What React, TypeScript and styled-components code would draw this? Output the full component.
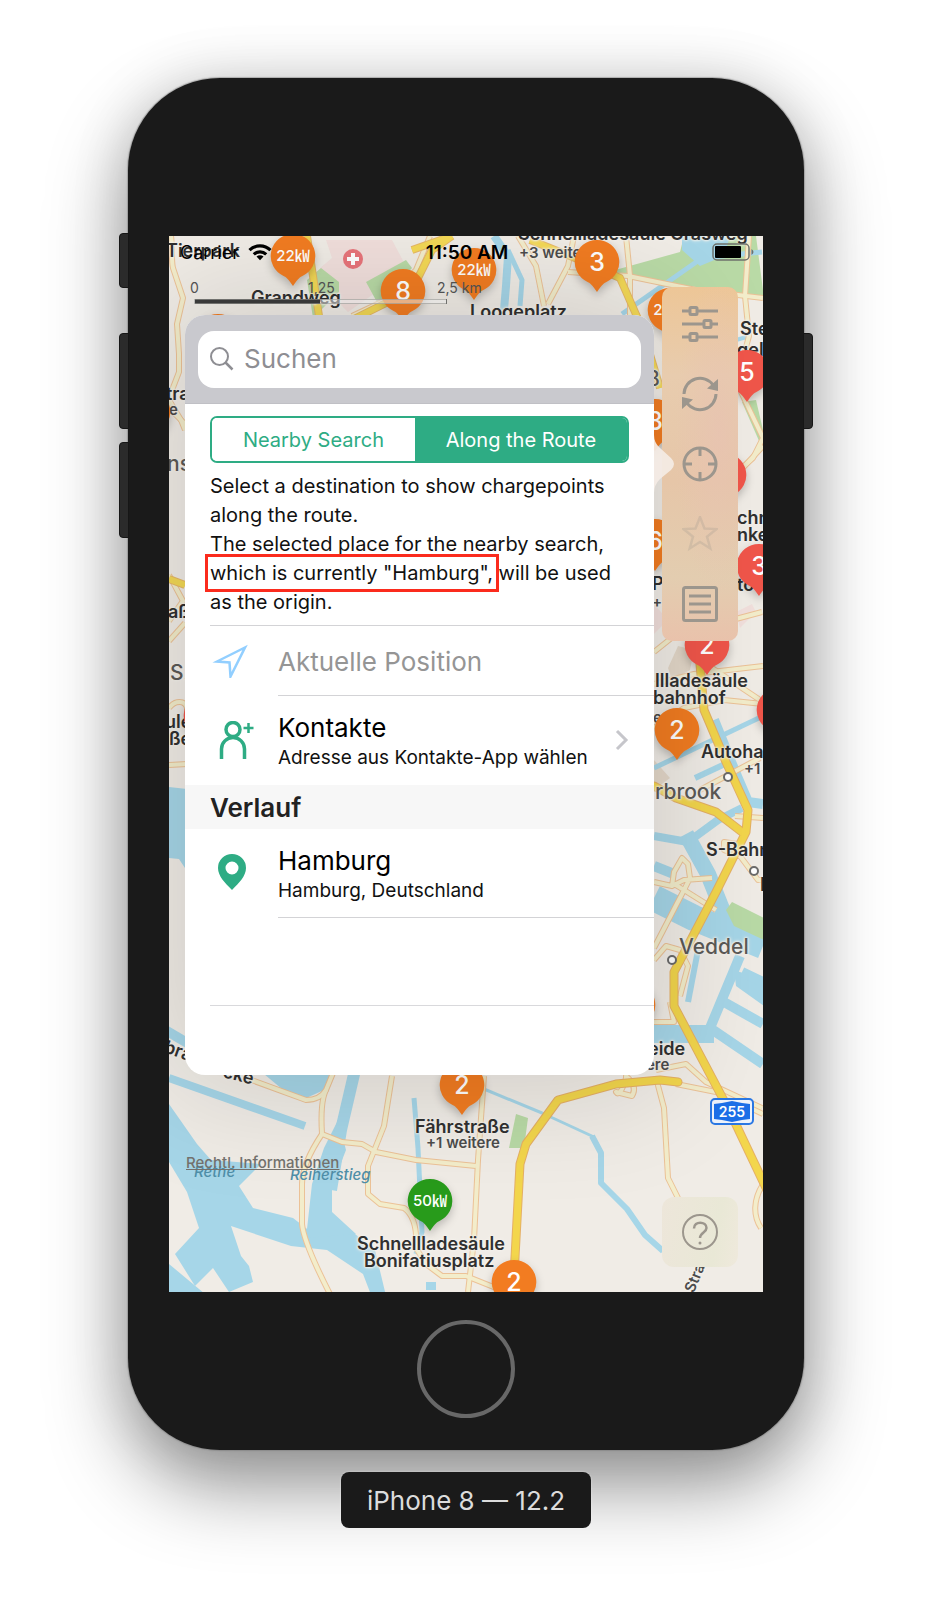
import React from "react";
import styled, { createGlobalStyle, css } from "styled-components";

const GlobalStyle = createGlobalStyle`
  *, *::before, *::after { box-sizing: border-box; }
  body {
    margin: 0;
    background: #fff;
    color: #111;
    font-family: Inter, "Liberation Sans", "Noto Sans CJK JP", sans-serif;
  }
  button, input { font: inherit; color: inherit; }
`;

const GREEN = "#2eac84";
const ORANGE = "#f27c21";
const RED = "#f0564a";

/* ---------- device ---------- */

const Page = styled.main`
  display: flex;
  flex-direction: column;
  align-items: center;
  padding: 78px 24px 72px;
  overflow: hidden;
`;

const Device = styled.section`
  position: relative;
  display: flex;
  flex-direction: column;
  align-items: center;
  width: 100%;
  max-width: 676px;
  padding: 158px 41px 32px;
  border-radius: 92px;
  background: #1a1a1a;
  box-shadow:
    0 0 1px 1px rgba(120, 120, 120, 0.5),
    0 0 60px rgba(0, 0, 0, 0.12),
    0 36px 80px rgba(0, 0, 0, 0.42);
`;

const SideKey = styled.span<{ $top: number; $height: number; $side: "left" | "right" }>`
  position: absolute;
  top: ${(p) => p.$top}px;
  ${(p) => p.$side}: -9px;
  width: 10px;
  height: ${(p) => p.$height}px;
  border: 1px solid #161616;
  border-radius: ${(p) => (p.$side === "left" ? "4px 0 0 4px" : "0 4px 4px 0")};
  background: #2b2b2b;
`;

const HomeButton = styled.button`
  width: 98px;
  height: 98px;
  margin-top: 28px;
  border: 4px solid #686868;
  border-radius: 50%;
  background: transparent;
`;

const DeviceName = styled.p`
  position: relative;
  margin: 22px 0 0;
  padding: 13px 26px 11px;
  border-radius: 8px;
  background: #1a1a1a;
  color: #dcdcdc;
  font-size: 26px;
  line-height: 32px;
  box-shadow: 0 0 2px rgba(255, 255, 255, 0.6);
`;

const Screen = styled.div`
  position: relative;
  display: flex;
  flex-direction: column;
  width: 100%;
  min-height: 1056px;
  overflow: hidden;
  background: #edeae4;
`;

/* ---------- map ---------- */

const MAP_ORIGIN = { x: 169, y: 236 };

const MapLayer = styled.div`
  position: absolute;
  inset: 0;
  overflow: hidden;
`;

const Terrain = styled.svg`
  display: block;
  width: 594px;
  height: 1056px;
`;

const PinRoot = styled.div<{ $x: number; $y: number; $small?: boolean }>`
  position: absolute;
  left: ${(p) => p.$x - MAP_ORIGIN.x - 22}px;
  top: ${(p) => p.$y - MAP_ORIGIN.y - 22}px;
  width: 44px;
  height: 52px;
  color: #fff;
  font-size: ${(p) => (p.$small ? 15 : 25)}px;
  font-weight: 500;
  line-height: 44px;
  text-align: center;
  white-space: nowrap;

  svg {
    position: absolute;
    inset: 0;
    overflow: visible;
    filter: drop-shadow(0 4px 4px rgba(0, 0, 0, 0.22));
  }
  span { position: relative; }
`;

type PinData = { x: number; y: number; text?: string; color?: string; small?: boolean };

const Pin = ({ x, y, text, color = ORANGE, small }: PinData) => (
  <PinRoot $x={x} $y={y} $small={small}>
    <svg width="44" height="52" viewBox="0 0 44 52" aria-hidden="true">
      <path d="M22 0a22 22 0 0 1 9 42.2c-3 1.4-5 4-9 9.8c-4-5.800-6-8.400-9-9.800A22 22 0 0 1 22 0z" fill={color} />
    </svg>
    {text && <span>{text}</span>}
  </PinRoot>
);

type LabelKind = "name" | "more" | "district" | "water";

const labelKinds = {
  name: css`font-size: 18px; font-weight: 600; color: #303030;`,
  more: css`font-size: 15px; font-weight: 600; color: #4c4c4c;`,
  district: css`font-size: 21px; font-weight: 500; color: #5c5a57;`,
  water: css`font-size: 15px; font-weight: 500; font-style: italic; color: #4f8fa8; text-shadow: none;`,
};

const MapLabel = styled.span<{ $x: number; $y: number; $kind: LabelKind; $angle?: number }>`
  position: absolute;
  left: ${(p) => p.$x - MAP_ORIGIN.x}px;
  top: ${(p) => p.$y - MAP_ORIGIN.y - 10}px;
  line-height: 20px;
  white-space: nowrap;
  text-shadow: 0 0 2px #f4f1ec, 0 0 2px #f4f1ec, 0 0 3px #f4f1ec, 0 0 4px #f4f1ec;
  ${(p) => labelKinds[p.$kind]}
  ${(p) => p.$angle !== undefined && css`transform: rotate(${p.$angle}deg);`}
`;

const Shield = styled.span`
  position: absolute;
  left: 541px;
  top: 862px;
  width: 44px;
  height: 27px;
  color: #fff;
  font-size: 14px;
  line-height: 27px;
  text-align: center;

  svg {
    position: absolute;
    inset: 0;
  }
  b {
    position: relative;
    font-weight: 600;
  }
`;

const pins: PinData[] = [
  { x: 218, y: 336 },
  { x: 293, y: 256, text: "22㎾", small: true },
  { x: 403, y: 291, text: "8" },
  { x: 474, y: 270, text: "22㎾", small: true },
  { x: 597, y: 262, text: "3" },
  { x: 670, y: 310, text: "22㎾", small: true },
  { x: 655, y: 421, text: "3" },
  { x: 655, y: 541, text: "6" },
  { x: 747, y: 372, text: "5", color: RED },
  { x: 724, y: 475, color: RED },
  { x: 759, y: 566, text: "3", color: RED },
  { x: 707, y: 645, text: "2", color: RED },
  { x: 677, y: 730, text: "2" },
  { x: 779, y: 710, color: RED },
  { x: 206, y: 716, color: RED },
  { x: 148, y: 412 },
  { x: 633, y: 1005 },
  { x: 462, y: 1085, text: "2" },
  { x: 430, y: 1201, text: "50㎾", color: "#289b1b", small: true },
  { x: 514, y: 1282, text: "2" },
];

const labels: { x: number; y: number; text: string; kind?: LabelKind; angle?: number }[] = [
  { x: 166, y: 251, text: "Tierpark" },
  { x: 251, y: 298, text: "Grandweg" },
  { x: 470, y: 312, text: "Loogeplatz" },
  { x: 518, y: 234, text: "Schnellladesäule Grasweg" },
  { x: 519, y: 253, text: "+3 weitere", kind: "more" },
  { x: 740, y: 329, text: "Stein" },
  { x: 737, y: 350, text: "gelb" },
  { x: 646, y: 379, text: "B", kind: "district" },
  { x: 166, y: 394, text: "traße" },
  { x: 169, y: 410, text: "e", kind: "more" },
  { x: 167, y: 464, text: "ns", kind: "district" },
  { x: 168, y: 612, text: "aße" },
  { x: 170, y: 673, text: "S.", kind: "district" },
  { x: 165, y: 722, text: "ule" },
  { x: 169, y: 739, text: "ße" },
  { x: 737, y: 518, text: "chni" },
  { x: 737, y: 535, text: "nken" },
  { x: 737, y: 585, text: "to" },
  { x: 652, y: 584, text: "P" },
  { x: 652, y: 602, text: "+", kind: "more" },
  { x: 655, y: 681, text: "llladesäule" },
  { x: 653, y: 698, text: "bahnhof" },
  { x: 653, y: 718, text: "e", kind: "more" },
  { x: 701, y: 752, text: "Autohaus" },
  { x: 744, y: 769, text: "+1", kind: "more" },
  { x: 655, y: 792, text: "rbrook", kind: "district" },
  { x: 706, y: 850, text: "S-Bahn" },
  { x: 760, y: 885, text: "E" },
  { x: 679, y: 947, text: "Veddel", kind: "district" },
  { x: 648, y: 1049, text: "eide" },
  { x: 646, y: 1065, text: "ere", kind: "more" },
  { x: 415, y: 1127, text: "Fährstraße" },
  { x: 426, y: 1143, text: "+1 weitere", kind: "more" },
  { x: 357, y: 1244, text: "Schnellladesäule" },
  { x: 364, y: 1261, text: "Bonifatiusplatz" },
  { x: 194, y: 1172, text: "Rethe", kind: "water" },
  { x: 290, y: 1175, text: "Reiherstieg", kind: "water" },
  { x: 164, y: 1051, text: "bra", angle: 20 },
  { x: 223, y: 1075, text: "cke", angle: 14 },
  { x: 680, y: 1278, text: "Stra", kind: "more", angle: -68 },
];

const minorRoads = [
  "M171 236c2 14 0 24 2 32l10 30-6 26 2 30 0 18-10 26 4 14 14 14",
  "M169 400l12 20 4 10",
  "M352 316l34-16 30-30 14-34",
  "M518 236l18 30 8 40",
  "M548 304l20-38 6-30",
  "M626 236l4 40 0 40",
  "M568 272l60 4 68 14 67 8",
  "M749 236l-4 60 4 40-8 30",
  "M741 392l22 46-10 20-20 18",
  "M763 446l-24 26-20 10",
  "M169 575l14 26-14 20",
  "M169 641l16-18",
  "M169 708c6-8 16-8 18 0l0 20",
  "M169 765l18-1",
  "M654 652l20-16 28-8 60-16",
  "M654 684l40-10 69-8",
  "M654 728l30-20 40-8 39 4",
  "M700 790l60-32",
  "M700 660l60 40",
  "M654 882l18 4 12-6 28-2M672 886l2-14 8-14 6 6 2 14-6 12-10-6zM684 890l-30 58",
  "M684 890l32 20",
  "M654 960l12-14 14 4 8 16-8 30",
  "M654 1022h20l-4-20",
  "M735 816l28 2",
  "M724 850l14 6 0-12-14-2z",
  "M740 856l18 24 5 0",
  "M656 1070l30-6 20 18 56 26",
  "M656 1078l8 30 4 70 10 20",
  "M763 1184c-10 16-10 32-2 44",
  "M246 1078l60 22q14 0 20-10l14-34",
  "M326 1090q-6 12-4 44l20 8 20 2 14 8 40 8 60 6",
  "M322 1134q-20 30-20 50v40q2 20 30 74",
  "M392 1076l-8 50-16 40v28l12 10 24 4q14 10 12 40l10 16 16 12h24l30 12",
  "M484 1076l-6 84-4 80-6 52",
  "M626 1078q-6 20-10 14l16 4q6-10-6-20z",
  "M676 1084l40 8 47 22",
];

const majorRoads = [
  "M307 236l6 40 6 40",
  "M530 240l50 20 40 18 22 50 18 60",
  "M352 320l60-30 20-40 20-14M412 250l40-14",
  "M169 579l16 6",
];

const highways = [
  "M700 664l4 46 22 52 22 48-2 22-30 60-42 80v34l56 106 38 80",
  "M654 786l22 12 40 14 26 20",
  "M514 1276l6-112 6-20 32-44 58-16 44-4 18 2",
];

const rivers: { d: string; w: number }[] = [
  { d: "M494 236l14 20-2 30-2 24", w: 8 },
  { d: "M508 250l14 30-2 26", w: 5 },
  { d: "M622 314l80-56 60-6", w: 5 },
  { d: "M169 1078l136 48", w: 8 },
  { d: "M165 1030l24 14", w: 10 },
  { d: "M355 1070l-14 60-10 60", w: 12 },
  { d: "M414 1098l4 50 4 84-6 22", w: 5 },
  { d: "M484 1089l58 24 52 24", w: 3 },
  { d: "M592 1136l9 17v30l26 26 18 26 18 16", w: 6 },
  { d: "M654 768l109-52", w: 5 },
  { d: "M695 778l30-14", w: 6 },
  { d: "M714 720l22 54 12 28 15 2", w: 10 },
  { d: "M654 836l34 6 30-22 24-12", w: 8 },
  { d: "M686 834l22 40 20 50", w: 16 },
  { d: "M654 866l20 8", w: 10 },
  { d: "M654 898l40 20 69 28", w: 26 },
  { d: "M698 950l-10 52", w: 6 },
  { d: "M740 956l-30 72 53 36", w: 10 },
  { d: "M654 1034h60", w: 18 },
  { d: "M724 1002l39 22M742 972l21 10", w: 10 },
  { d: "M654 425l20-24", w: 4 },
  { d: "M736 340l14-4", w: 4 },
];

const waterAreas = [
  "M169 787l18 2v82l-8-12-10-1z",
  "M682 236h48l-6 20-24 10-18-16z",
  "M169 1104l28 40 14 16 50 4-22 22 14 22 40 10 18 14 20-14 14 8 30 24 12 50h-14l-10-26-36-24-36-4-60-20 10 30 8 10 4 16-24 10-16-24-18 18-20-32 24-26-12-36-24-40z",
  "M169 1264l36 30h-36z",
  "M264 1074h66l-6 16-22 10-14-6z",
  "M312 1184l12-36 14-28 8 30-14 36v26l24 22-50 4z",
  "M426 1290v-8h10v8z",
  "M734 970l30 10v26l-28-20z",
];

const parks = [
  "M558 252l50 20 72-20 4-16 72 0 8 62-60-10-80-10z",
  "M307 280l14-12 18 14 0 10-26 26z",
  "M366 282l40-22 6 8-34 36z",
  "M742 402l14-2 7 30v20z",
  "M516 1114l12 4-4 30h-15z",
];

const blocks = [
  "M326 240h66l16 30-60 42-10-10-18-34 12-10z",
  "M736 612l16-8 4 8-16 16z",
  "M654 604l14 16-14 14z",
];

const CityMap = () => (
  <MapLayer>
    <Terrain viewBox="169 236 594 1056" role="img" aria-label="Map of Hamburg">
      <rect x="169" y="236" width="594" height="1056" fill="#f0ece6" />
      {blocks.map((d) => <path key={d} d={d} fill="#f1dfdc" />)}
      <path d="M668 668l10-22 16 4-4 20-18 10z M654 760l16 18-16 12z" fill="#e4d8c9" />
      {parks.map((d) => <path key={d} d={d} fill="#b9daa6" />)}
      {waterAreas.map((d) => <path key={d} d={d} fill="#a6d6e8" />)}
      <g fill="none" stroke="#a6d6e8" strokeLinejoin="round">
        {rivers.map((r) => <path key={r.d} d={r.d} strokeWidth={r.w} />)}
      </g>
      <path d="M726 910l6-8 32 16v22l-30-14z" fill="#b9daa6" />
      <g fill="none" strokeLinejoin="round">
        <g stroke="#ecc297" strokeWidth="6">
          {minorRoads.map((d) => <path key={d} d={d} />)}
        </g>
        <g stroke="#f3edcb" strokeWidth="4">
          {minorRoads.map((d) => <path key={d} d={d} />)}
        </g>
        <g stroke="#e7b867" strokeWidth="8">
          {majorRoads.map((d) => <path key={d} d={d} />)}
        </g>
        <g stroke="#f4d956" strokeWidth="6">
          {majorRoads.map((d) => <path key={d} d={d} />)}
        </g>
        <g stroke="#e5b065" strokeWidth="9" strokeLinecap="round">
          {highways.map((d) => <path key={d} d={d} />)}
        </g>
        <g stroke="#f3d64c" strokeWidth="7" strokeLinecap="round">
          {highways.map((d) => <path key={d} d={d} />)}
        </g>
      </g>
      <g fill="#fff" stroke="#6b6b6b" strokeWidth="2">
        <circle cx="728" cy="777" r="4" />
        <circle cx="754" cy="871" r="4" />
        <circle cx="672" cy="960" r="4" />
      </g>
      <circle cx="353" cy="259" r="10" fill="#e8747a" />
      <path d="M353 253v12M347 259h12" stroke="#fff" strokeWidth="4" />
    </Terrain>
    {labels.map((l) => (
      <MapLabel key={l.text + l.y} $x={l.x} $y={l.y} $kind={l.kind ?? "name"} $angle={l.angle}>
        {l.text}
      </MapLabel>
    ))}
    <Shield>
      <svg width="44" height="27" viewBox="0 0 44 27" aria-hidden="true">
        <rect x="1" y="1" width="42" height="25" rx="4" fill="#eef3fb" stroke="#2b78e4" strokeWidth="2" />
        <path d="M4 6l8-1 10-2 10 2 8 1v15l-8 1-10 2-10-2-8-1z" fill="#1c6fe8" />
      </svg>
      <b>255</b>
    </Shield>
    {pins.map((p) => <Pin key={`${p.x}-${p.y}`} {...p} />)}
  </MapLayer>
);

/* ---------- status bar and scale ---------- */

const StatusBar = styled.header`
  position: relative;
  display: grid;
  grid-template-columns: 1fr auto 1fr;
  align-items: center;
  height: 32px;
  padding: 0 9px 0 11px;
  color: #000;
  font-size: 18px;
`;

const Carrier = styled.span`
  display: flex;
  align-items: center;
  gap: 9px;
`;

const Clock = styled.time`
  font-size: 19px;
  font-weight: 600;
`;

const Battery = styled.svg`
  justify-self: end;
`;

const Body = styled.div`
  position: relative;
  display: flex;
  flex: 1;
  gap: 8px;
  padding: 0 25px 25px 16px;
`;

const Column = styled.div`
  flex: 1;
  min-width: 0;
`;

const Scale = styled.div`
  display: grid;
  grid-template-columns: 118px 129px auto;
  justify-content: start;
  margin: 11px 0 0 5px;
  color: #555;
  font-size: 14px;
  line-height: 18px;
`;

const ScaleBar = styled.div`
  width: 253px;
  height: 5px;
  margin: 2px 0 11px 9px;
  border: 1px solid rgba(160, 160, 155, 0.6);
  background: linear-gradient(90deg, #3d3d3d 50%, rgba(255, 255, 255, 0.5) 50%);
`;

/* ---------- search popover ---------- */

const Popover = styled.section`
  position: relative;
  padding-bottom: 69px;
  border-radius: 20px;
  background: #fff;
  box-shadow: 0 0 120px 16px rgba(0, 0, 0, 0.14);
`;

const PopoverArrow = styled.svg`
  position: absolute;
  top: 120px;
  left: 100%;
  z-index: 1;
`;

const SearchHeader = styled.label`
  display: block;
  position: relative;
  padding: 16px 13px 15px;
  border-bottom: 1px solid #c0c0c5;
  border-radius: 20px 20px 0 0;
  background: #c9c9ce;

  svg {
    position: absolute;
    left: 25px;
    top: 32px;
  }
`;

const SearchInput = styled.input`
  display: block;
  width: 100%;
  height: 57px;
  padding: 0 16px 3px 46px;
  border: 0;
  border-radius: 16px;
  background: #fff;
  font-size: 26px;
  outline: none;

  &::placeholder { color: #8e8e93; opacity: 1; }
`;

const Tabs = styled.div`
  display: flex;
  margin: 12px 25px 9px;
  overflow: hidden;
  border: 2px solid ${GREEN};
  border-radius: 7px;
`;

const Tab = styled.button<{ $active?: boolean }>`
  flex: 1 1 auto;
  height: 43px;
  padding: 0;
  border: 0;
  background: ${(p) => (p.$active ? GREEN : "#fff")};
  color: ${(p) => (p.$active ? "#fff" : GREEN)};
  font-size: 20px;
`;

const Hint = styled.p`
  margin: 0 0 0 25px;
  padding-bottom: 8px;
  border-bottom: 1px solid #d3d3d6;
  font-size: 20px;
  line-height: 29px;
  white-space: nowrap;
`;

const Marked = styled.span`
  position: relative;

  &::after {
    content: "";
    position: absolute;
    inset: -7px -6px -7px -5px;
    border: 3px solid #fb2b1d;
  }
`;

const Row = styled.button<{ $tall?: boolean }>`
  display: flex;
  width: 100%;
  height: ${(p) => (p.$tall ? 89 : 70)}px;
  padding: 0 0 0 25px;
  border: 0;
  background: none;
  text-align: left;
`;

const RowIcon = styled.span`
  display: flex;
  flex: 0 0 68px;
  align-items: center;
`;

const RowText = styled.span<{ $line?: boolean }>`
  display: flex;
  flex: 1;
  flex-direction: column;
  justify-content: center;
  padding-top: 2px;
  border-bottom: 1px solid ${(p) => (p.$line ? "#d3d3d6" : "transparent")};
`;

const RowTitle = styled.span<{ $muted?: boolean }>`
  color: ${(p) => (p.$muted ? "#959595" : "#000")};
  font-size: 26px;
  line-height: 32px;
`;

const RowDetail = styled.span`
  font-size: 19px;
  line-height: 27px;
`;

const RowEnd = styled.span`
  display: flex;
  align-items: center;
  padding-right: 25px;
  margin-left: -40px;
`;

const SectionTitle = styled.h2`
  margin: 0;
  padding: 1px 0 0 25px;
  background: #f7f7f7;
  color: #222;
  font-size: 26px;
  font-weight: 600;
  line-height: 43px;
`;

const EmptyRow = styled.div`
  height: 88px;
  margin-left: 25px;
  border-bottom: 1px solid #d9d9dc;
`;

const Legal = styled.a`
  display: inline-block;
  margin: 78px 0 0 1px;
  color: #74726e;
  font-size: 15px;
  font-weight: 500;
  line-height: 20px;
`;

/* ---------- tool bar ---------- */

const Rail = styled.div`
  position: relative;
  display: flex;
  flex-direction: column;
  justify-content: space-between;
  width: 76px;
  padding-top: 19px;
`;

const Tools = styled.nav`
  display: flex;
  flex-direction: column;
  padding: 2px 0;
  border-radius: 10px;
  background:
    radial-gradient(ellipse at 75% 42%, rgba(232, 194, 178, 0.7), transparent 55%),
    linear-gradient(180deg, #edc697 0%, #e8ccae 25%, #e6c6a8 55%, #e3cdb0 82%, #e9c2ab 100%);
`;

const Tool = styled.button<{ $dim?: boolean }>`
  display: flex;
  align-items: center;
  justify-content: center;
  height: 70px;
  padding: 0 0 1px;
  border: 0;
  background: none;
  opacity: ${(p) => (p.$dim ? 0.25 : 1)};
`;

const Help = styled(Tool)`
  border-radius: 12px;
  background: linear-gradient(100deg, #ede6da, #e9e8d6 70%, #efe9dc);
`;

const ToolIcon = ({ children }: { children: React.ReactNode }) => (
  <svg width="36" height="36" viewBox="0 0 36 36" fill="none" stroke="#9c968d" strokeWidth="3" aria-hidden="true">
    {children}
  </svg>
);

export default function App() {
  return (
    <>
      <GlobalStyle />
      <Page>
        <Device>
          <SideKey $side="left" $top={155} $height={55} />
          <SideKey $side="left" $top={255} $height={96} />
          <SideKey $side="left" $top={364} $height={96} />
          <SideKey $side="right" $top={255} $height={96} />
          <Screen>
            <CityMap />
            <StatusBar>
              <Carrier>
                Carrier
                <svg width="24" height="17" viewBox="0 0 24 17" fill="none" stroke="#000" strokeWidth="3.200" aria-label="Wi-Fi">
                  <path d="M1.500 6.200a15 15 0 0 1 21 0M5.800 10.300a9 9 0 0 1 12.400 0" />
                  <path d="M8.500 12.600a5 5 0 0 1 7 0L12 16.200z" fill="#000" stroke="none" />
                </svg>
              </Carrier>
              <Clock>11:50 AM</Clock>
              <Battery width="42" height="19" viewBox="0 0 42 19" aria-label="Battery">
                <rect x="1" y="1" width="36" height="16" rx="4" fill="none" stroke="#6f716c" strokeWidth="1.500" />
                <rect x="3" y="3" width="26" height="12" rx="1" fill="#000" />
                <path d="M39.500 6q4 3 0 6z" fill="#6f716c" />
              </Battery>
            </StatusBar>
            <Body>
              <Column>
                <Scale>
                  <span>0</span>
                  <span>1,25</span>
                  <span>2,5 km</span>
                </Scale>
                <ScaleBar />
                <Popover>
                  <PopoverArrow width="21" height="58" viewBox="0 0 21 58" aria-hidden="true">
                    <path d="M0 0q0 8 6 13l11 10q6 6 0 12L6 44q-6 6-6 14z" fill="#f4ece5" fillOpacity="0.92" />
                  </PopoverArrow>
                  <SearchHeader>
                    <SearchInput type="search" placeholder="Suchen" aria-label="Suchen" />
                    <svg width="24" height="24" viewBox="0 0 24 24" fill="none" stroke="#8e8e93" strokeWidth="2" aria-hidden="true">
                      <circle cx="9.500" cy="9.500" r="8.500" />
                      <path d="M15.500 15.500l7 7" strokeWidth="2.500" />
                    </svg>
                  </SearchHeader>
                  <Tabs>
                    <Tab>Nearby Search</Tab>
                    <Tab $active>Along the Route</Tab>
                  </Tabs>
                  <Hint>
                    Select a destination to show chargepoints
                    <br />
                    along the route.
                    <br />
                    The selected place for the nearby search,
                    <br />
                    <Marked>which is currently "Hamburg",</Marked> will be used
                    <br />
                    as the origin.
                  </Hint>
                  <Row>
                    <RowIcon>
                      <svg width="42" height="34" viewBox="0 0 42 34" fill="none" stroke="#92cfff" strokeWidth="2.500" aria-hidden="true">
                        <path d="M7 17.500L35 3.500L20.500 32.500L19.500 18.500z" />
                      </svg>
                    </RowIcon>
                    <RowText $line>
                      <RowTitle $muted>Aktuelle Position</RowTitle>
                    </RowText>
                  </Row>
                  <Row $tall>
                    <RowIcon>
                      <svg width="46" height="40" viewBox="0 0 46 40" fill="none" stroke={GREEN} strokeWidth="3.500" aria-hidden="true">
                        <circle cx="23" cy="8.500" r="7" />
                        <path d="M11.500 38V28a11.500 11.500 0 0 1 23 0v10" />
                        <path d="M38.500 2v10M33.500 7h10" strokeWidth="2.500" />
                      </svg>
                    </RowIcon>
                    <RowText>
                      <RowTitle>Kontakte</RowTitle>
                      <RowDetail>Adresse aus Kontakte-App wählen</RowDetail>
                    </RowText>
                    <RowEnd>
                      <svg width="14" height="24" viewBox="0 0 14 24" fill="none" stroke="#c6c6cb" strokeWidth="3" aria-hidden="true">
                        <path d="M2 2l9 9-9 9" />
                      </svg>
                    </RowEnd>
                  </Row>
                  <SectionTitle>Verlauf</SectionTitle>
                  <Row $tall>
                    <RowIcon>
                      <svg width="44" height="40" viewBox="0 0 44 40" aria-hidden="true">
                        <path fillRule="evenodd" fill={GREEN} d="M22 0a14 14 0 0 1 14 14c0 8-7 15-14 22C15 29 8 22 8 14A14 14 0 0 1 22 0zm0 7.500a6.500 6.500 0 1 0 0 13a6.500 6.500 0 0 0 0-13z" />
                      </svg>
                    </RowIcon>
                    <RowText $line>
                      <RowTitle>Hamburg</RowTitle>
                      <RowDetail>Hamburg, Deutschland</RowDetail>
                    </RowText>
                  </Row>
                  <EmptyRow />
                </Popover>
                <Legal href="#legal">Rechtl. Informationen</Legal>
              </Column>
              <Rail>
                <Tools aria-label="Map tools">
                  <Tool aria-label="Filter">
                    <ToolIcon>
                      <path d="M0 5h7M16 5h20M0 18h21M30 18h6M0 31h7M16 31h20" />
                      <rect x="8" y="1.500" width="7" height="7" rx="1" />
                      <rect x="22" y="14.500" width="7" height="7" rx="1" />
                      <rect x="8" y="27.500" width="7" height="7" rx="1" />
                    </ToolIcon>
                  </Tool>
                  <Tool aria-label="Refresh">
                    <ToolIcon>
                      <path d="M2 18a16 16 0 0 1 29-9M34 18a16 16 0 0 1-29 9" />
                      <path d="M36 3v12l-11-2.500zM0 33V21l11 2.500z" fill="#9c968d" stroke="none" />
                    </ToolIcon>
                  </Tool>
                  <Tool aria-label="Locate">
                    <ToolIcon>
                      <circle cx="18" cy="18" r="16" />
                      <path d="M18 2v8M18 26v8M2 18h8M26 18h8" />
                    </ToolIcon>
                  </Tool>
                  <Tool $dim aria-label="Favourites">
                    <ToolIcon>
                      <path d="M18 1l4.500 11.500 12 .6-9.500 7.600 3.300 11.800L18 26 7.700 32.500 11 20.700 1.500 13.100l12-.6z" strokeWidth="2.500" />
                    </ToolIcon>
                  </Tool>
                  <Tool aria-label="List">
                    <ToolIcon>
                      <rect x="1.500" y="1.500" width="33" height="33" rx="2" />
                      <path d="M7 10h22M7 18h22M7 26h22" />
                    </ToolIcon>
                  </Tool>
                </Tools>
                <Help aria-label="Help">
                  <ToolIcon>
                    <circle cx="18" cy="18" r="17" strokeWidth="2" />
                    <path d="M12 14.500c0-8 12.500-7.500 12.500-.5c0 4.500-6.500 4.500-6.500 10" strokeWidth="2.500" />
                    <circle cx="18" cy="29" r="1.500" fill="#9c968d" stroke="none" />
                  </ToolIcon>
                </Help>
              </Rail>
            </Body>
          </Screen>
          <HomeButton aria-label="Home" />
        </Device>
        <DeviceName>iPhone 8 — 12.2</DeviceName>
      </Page>
    </>
  );
}
